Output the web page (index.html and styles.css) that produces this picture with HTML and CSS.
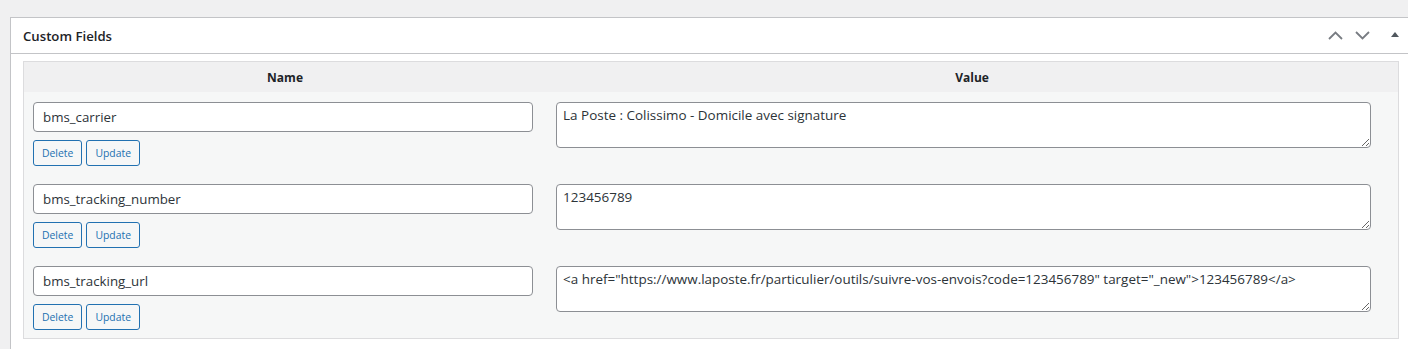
FILE: index.html
```html
<!DOCTYPE html>
<html lang="en">
<head>
<meta charset="utf-8">
<title>Custom Fields</title>
<link rel="stylesheet" href="styles.css">
</head>
<body>
<div class="wrap">
  <div class="postbox">
    <div class="postbox-header">
      <h2 class="hndle">Custom Fields</h2>
      <div class="handles">
        <svg class="chev" width="15" height="9" viewBox="0 0 15 9"><polyline points="1,8 7.5,1.5 14,8" fill="none" stroke="#787c82" stroke-width="1.8"/></svg>
        <svg class="chev down" width="15" height="9" viewBox="0 0 15 9"><polyline points="1,1 7.5,7.5 14,1" fill="none" stroke="#787c82" stroke-width="1.8"/></svg>
        <svg class="tri" width="8" height="5" viewBox="0 0 8 5"><polygon points="0,5 4,0 8,5" fill="#50575e"/></svg>
      </div>
    </div>
    <div class="inside">
      <table class="meta">
        <thead>
          <tr>
            <th class="left">Name</th>
            <th>Value</th>
          </tr>
        </thead>
        <tbody>
          <tr>
            <td class="left">
              <input class="key" type="text" value="bms_carrier">
              <div class="actions">
                <button class="btn">Delete</button>
                <button class="btn">Update</button>
              </div>
            </td>
            <td><textarea class="val">La Poste : Colissimo - Domicile avec signature</textarea></td>
          </tr>
          <tr>
            <td class="left">
              <input class="key" type="text" value="bms_tracking_number">
              <div class="actions">
                <button class="btn">Delete</button>
                <button class="btn">Update</button>
              </div>
            </td>
            <td><textarea class="val">123456789</textarea></td>
          </tr>
          <tr>
            <td class="left">
              <input class="key" type="text" value="bms_tracking_url">
              <div class="actions">
                <button class="btn">Delete</button>
                <button class="btn">Update</button>
              </div>
            </td>
            <td><textarea class="val">&lt;a href="https://www.laposte.fr/particulier/outils/suivre-vos-envois?code=123456789" target="_new"&gt;123456789&lt;/a&gt;</textarea></td>
          </tr>
        </tbody>
      </table>
    </div>
  </div>
</div>
</body>
</html>
```
FILE: styles.css
```css
html, body {
  margin: 0;
  padding: 0;
  background: #f0f0f1;
  overflow: hidden;
  font-family: "Open Sans", "Noto Sans", sans-serif;
  color: #2c3338;
}
.wrap {
  padding: 17px 0 0 10px;
}
.postbox {
  background: #fff;
  border: 1px solid #c3c4c7;
  margin-right: -4px;
  min-height: 340px;
}
.postbox-header {
  display: flex;
  align-items: center;
  height: 35px;
  padding: 0 12px;
  border-bottom: 1px solid #c3c4c7;
}
.hndle {
  flex: 1;
  margin: 0;
  font-size: 13.2px;
  font-weight: 600;
  color: #1d2327;
}
.handles {
  display: flex;
  align-items: center;
}
.chev {
  display: block;
}
.chev.down {
  margin-left: 12px;
}
.tri {
  display: block;
  margin-left: 21px;
  margin-bottom: 2px;
}
.inside {
  padding: 7px 12px 12px;
}
.meta {
  width: 100%;
  border: 1px solid #dcdcde;
  border-spacing: 0;
  background: #f6f7f7;
}
.meta th {
  height: 30px;
  padding: 0;
  background: #f0f0f1;
  font-size: 12px;
  font-weight: 700;
  color: #1d2327;
  text-align: center;
}
.meta .left {
  width: 38%;
}
.meta td {
  vertical-align: top;
  padding: 10px 10px 8px 10px;
}
.meta td.left {
  padding-left: 9px;
}
.key {
  display: block;
  box-sizing: border-box;
  width: 500px;
  height: 30px;
  margin: 0;
  padding: 0 9px;
  border: 1px solid #8c8f94;
  border-radius: 4px;
  background: #fff;
  font-family: inherit;
  font-size: 13.3px;
  color: #2c3338;
}
.actions {
  display: flex;
  gap: 4px;
  margin-top: 8px;
}
.btn {
  box-sizing: border-box;
  height: 26px;
  padding: 0 8px;
  border: 1px solid #2271b1;
  border-radius: 3px;
  background: #f6f7f7;
  color: #2271b1;
  font-family: inherit;
  font-size: 10.4px;
  line-height: 24px;
}
.val {
  display: block;
  box-sizing: border-box;
  width: 815px;
  height: 46px;
  margin: 0;
  padding: 2px 6px;
  border: 1px solid #8c8f94;
  border-radius: 4px;
  background: #fff;
  font-family: inherit;
  font-size: 13.45px;
  line-height: 1.5;
  color: #2c3338;
  resize: vertical;
}
```
